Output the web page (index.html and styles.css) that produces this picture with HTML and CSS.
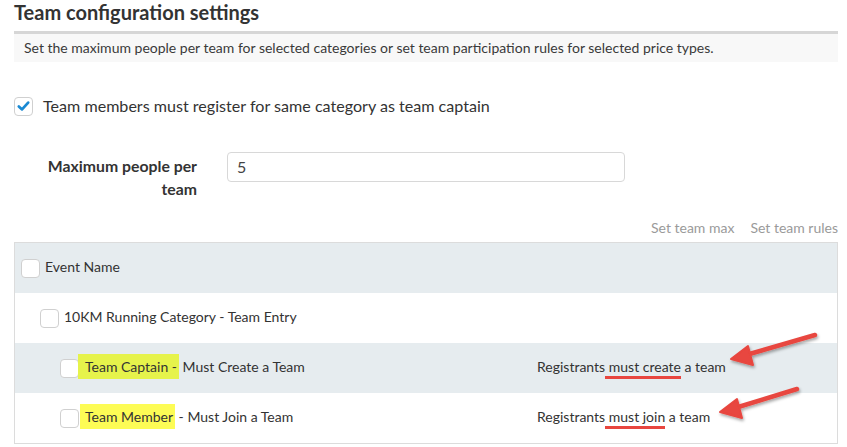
FILE: index.html
```html
<!DOCTYPE html>
<html>
<head>
<meta charset="utf-8">
<link rel="stylesheet" href="styles.css">
</head>
<body>
<div class="page">
  <h1 class="title">Team configuration settings</h1>
  <div class="desc">Set the maximum people per team for selected categories or set team participation rules for selected price types.</div>

  <label class="check-row">
    <span class="cb checked"><svg viewBox="0 0 20 20" width="20" height="20"><path d="M4.5 10.5 L8.3 14 L15.5 6" fill="none" stroke="#1b8ad3" stroke-width="3.2" stroke-linecap="round" stroke-linejoin="round"/></svg></span>
    <span class="check-label">Team members must register for same category as team captain</span>
  </label>

  <div class="field">
    <div class="field-label">Maximum people per team</div>
    <div class="input">5</div>
  </div>

  <div class="actions">
    <span>Set team max</span>
    <span>Set team rules</span>
  </div>

  <div class="table">
    <div class="row shaded lvl0">
      <span class="cb"></span>
      <span class="name">Event Name</span>
    </div>
    <div class="row lvl1">
      <span class="cb"></span>
      <span class="name">10KM Running Category - Team Entry</span>
    </div>
    <div class="row shaded lvl2">
      <span class="cb"></span>
      <span class="name"><mark class="hl hl-a">Team Captain -</mark> Must Create a Team</span>
      <span class="rule">Registrants<span class="red-ul"> must create</span> a team</span>
    </div>
    <div class="row lvl2">
      <span class="cb"></span>
      <span class="name"><mark class="hl hl-b">Team Member</mark> - Must Join a Team</span>
      <span class="rule">Registrants<span class="red-ul"> must join</span> a team</span>
    </div>
  </div>

  <svg class="arrows" width="847" height="447" viewBox="0 0 847 447">
    <defs>
      <filter id="sh" x="-20%" y="-20%" width="140%" height="140%">
        <feDropShadow dx="1" dy="2" stdDeviation="1.5" flood-color="#000" flood-opacity="0.35"/>
      </filter>
    </defs>
    <g filter="url(#sh)" fill="#e8463f" stroke="#e8463f" stroke-linecap="round" stroke-linejoin="round">
      <line x1="815" y1="335" x2="746" y2="355" stroke-width="4.5"/>
      <polygon points="731,359 748,346 753,365" stroke-width="2"/>
      <line x1="797" y1="389" x2="735" y2="408" stroke-width="4.5"/>
      <polygon points="720,412 737,399 742,418" stroke-width="2"/>
    </g>
  </svg>
</div>
</body>
</html>
```
FILE: styles.css
```css
* { box-sizing: border-box; }
html, body { margin: 0; padding: 0; background: #fff; }
body {
  font-family: Lato, "Open Sans", sans-serif;
  color: #333;
  width: 847px;
  height: 447px;
  overflow: hidden;
}
.page {
  position: relative;
  padding: 0 9px 0 14px;
}
.title {
  margin: 0;
  height: 31px;
  font-size: 20px;
  font-weight: 700;
  line-height: 24px;
  color: #333;
}
.desc {
  border-top: 3px solid #d6d6d6;
  background: #f8f8f8;
  height: 31px;
  padding-left: 10px;
  font-size: 14px;
  line-height: 28px;
  color: #3a3a3a;
}
.check-row {
  display: flex;
  align-items: center;
  gap: 10px;
  margin-top: 33px;
  height: 22px;
  font-size: 16.1px;
}
.check-label { padding-bottom: 2px; }
.cb {
  width: 19px;
  height: 19px;
  border: 1px solid #d0d0d0;
  border-radius: 4px;
  background: #fff;
  display: inline-flex;
  align-items: center;
  justify-content: center;
  flex: none;
}
.cb svg { display: block; }
.field {
  display: flex;
  align-items: flex-start;
  margin-top: 35px;
}
.field-label {
  width: 183px;
  text-align: right;
  font-weight: 700;
  font-size: 15.8px;
  line-height: 23px;
  padding-left: 26px;
  padding-top: 2px;
}
.input {
  margin-left: 30px;
  width: 398px;
  height: 30px;
  border: 1px solid #d8d8d8;
  border-radius: 4px;
  padding-left: 9px;
  font-size: 16px;
  line-height: 27px;
  color: #444;
}
.actions {
  display: flex;
  justify-content: flex-end;
  gap: 16px;
  margin-top: 19px;
  height: 20px;
  line-height: 18px;
  font-size: 14px;
  color: #9a9a9a;
}
.table {
  margin-top: 3px;
  border: 1px solid #dcdcdc;
}
.row {
  display: flex;
  align-items: center;
  height: 50px;
  font-size: 14px;
  color: #333;
}
.row.shaded { background: #e6ecef; }
.lvl0 { padding-left: 6px; }
.lvl0 .cb { margin-right: 5px; }
.lvl1 { padding-left: 25px; }
.lvl1 .cb { margin-right: 5px; }
.lvl2 { padding-left: 45px; }
.lvl2 .cb { margin-right: 6px; }
.lvl2 .name { width: 452px; }
.name, .rule { flex: none; padding-bottom: 3px; }
.hl {
  color: #333;
  padding: 4px 2px 4px 0;
}
.hl-a { background: #e6f34b; box-shadow: -7px 0 0 #e6f34b; }
.hl-b { background: #fdfc55; box-shadow: -5px 0 0 #fdfc55; }
.red-ul {
  border-bottom: 3px solid #e8463f;
  padding-bottom: 1px;
}
.arrows {
  position: absolute;
  left: 0;
  top: 0;
  pointer-events: none;
}
```
